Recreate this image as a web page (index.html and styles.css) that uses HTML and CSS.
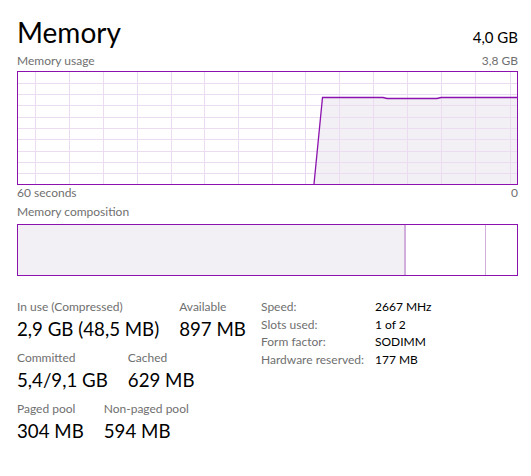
FILE: index.html
```html
<!DOCTYPE html>
<html lang="en">
<head>
<meta charset="utf-8">
<title>Memory</title>
<link rel="stylesheet" href="styles.css">
</head>
<body>
<main class="panel">
  <header class="header">
    <h1 class="title">Memory</h1>
    <span class="total">4,0 GB</span>
  </header>

  <div class="caption-row caption-top">
    <span>Memory usage</span>
    <span>3,8 GB</span>
  </div>
  <svg class="graph" width="501" height="114" viewBox="0 0 501 114" aria-label="Memory usage graph">
    <polygon class="graph-fill" points="297,113 305.5,26.5 366,26.5 370,27.5 420,27.5 424,26.5 500,26.5 500,113"/>
    <g class="graph-grid">
      <line x1="18.5" y1="0" x2="18.5" y2="114"/>
      <line x1="52.5" y1="0" x2="52.5" y2="114"/>
      <line x1="86.5" y1="0" x2="86.5" y2="114"/>
      <line x1="120.5" y1="0" x2="120.5" y2="114"/>
      <line x1="154.5" y1="0" x2="154.5" y2="114"/>
      <line x1="187.5" y1="0" x2="187.5" y2="114"/>
      <line x1="221.5" y1="0" x2="221.5" y2="114"/>
      <line x1="255.5" y1="0" x2="255.5" y2="114"/>
      <line x1="288.5" y1="0" x2="288.5" y2="114"/>
      <line x1="322.5" y1="0" x2="322.5" y2="114"/>
      <line x1="356.5" y1="0" x2="356.5" y2="114"/>
      <line x1="390.5" y1="0" x2="390.5" y2="114"/>
      <line x1="424.5" y1="0" x2="424.5" y2="114"/>
      <line x1="458.5" y1="0" x2="458.5" y2="114"/>
      <line x1="493.5" y1="0" x2="493.5" y2="114"/>
      <line x1="0" y1="12.5" x2="501" y2="12.5"/>
      <line x1="0" y1="23.5" x2="501" y2="23.5"/>
      <line x1="0" y1="34.5" x2="501" y2="34.5"/>
      <line x1="0" y1="46.5" x2="501" y2="46.5"/>
      <line x1="0" y1="57.5" x2="501" y2="57.5"/>
      <line x1="0" y1="68.5" x2="501" y2="68.5"/>
      <line x1="0" y1="80.5" x2="501" y2="80.5"/>
      <line x1="0" y1="91.5" x2="501" y2="91.5"/>
      <line x1="0" y1="102.5" x2="501" y2="102.5"/>
    </g>
    <polyline class="graph-line" points="297,113 305.5,26.5 366,26.5 370,27.5 420,27.5 424,26.5 500,26.5"/>
    <rect class="graph-border" x="0.5" y="0.5" width="500" height="113"/>
  </svg>
  <div class="caption-row caption-axis">
    <span>60 seconds</span>
    <span>0</span>
  </div>

  <div class="caption-row caption-comp">
    <span>Memory composition</span>
  </div>
  <div class="composition">
    <div class="seg seg-inuse" style="width:388px"></div>
    <div class="seg seg-modified" style="width:80px"></div>
    <div class="seg seg-free"></div>
  </div>

  <section class="stats">
    <div class="stats-left">
      <div class="stat-row">
        <div class="stat">
          <div class="stat-label">In use (Compressed)</div>
          <div class="stat-value">2,9 GB (48,5 MB)</div>
        </div>
        <div class="stat">
          <div class="stat-label">Available</div>
          <div class="stat-value">897 MB</div>
        </div>
      </div>
      <div class="stat-row">
        <div class="stat">
          <div class="stat-label">Committed</div>
          <div class="stat-value">5,4/9,1 GB</div>
        </div>
        <div class="stat">
          <div class="stat-label">Cached</div>
          <div class="stat-value">629 MB</div>
        </div>
      </div>
      <div class="stat-row">
        <div class="stat">
          <div class="stat-label">Paged pool</div>
          <div class="stat-value">304 MB</div>
        </div>
        <div class="stat">
          <div class="stat-label">Non-paged pool</div>
          <div class="stat-value">594 MB</div>
        </div>
      </div>
    </div>
    <dl class="specs">
      <dt>Speed:</dt><dd>2667 MHz</dd>
      <dt>Slots used:</dt><dd>1 of 2</dd>
      <dt>Form factor:</dt><dd>SODIMM</dd>
      <dt>Hardware reserved:</dt><dd>177 MB</dd>
    </dl>
  </section>
</main>
</body>
</html>
```
FILE: styles.css
```css
* { box-sizing: border-box; }

html, body {
  margin: 0;
  padding: 0;
  background: #ffffff;
}

body {
  font-family: Lato, "Open Sans", "Liberation Sans", sans-serif;
  color: #000000;
}

.panel {
  width: 531px;
  padding: 14px 13px 0 17px;
}

.header {
  display: flex;
  justify-content: space-between;
  align-items: baseline;
  height: 36px;
}

.title {
  margin: 0;
  font-size: 28px;
  font-weight: 400;
  line-height: 36px;
}

.total {
  font-size: 15px;
  line-height: 20px;
}

.caption-row {
  display: flex;
  justify-content: space-between;
  font-size: 12px;
  line-height: 16px;
  color: #6f6f6f;
}

.caption-top { margin-top: 3px; }
.caption-axis { margin-top: 0; }
.caption-comp { margin-top: 3px; }

.graph {
  display: block;
  margin-top: 2px;
}

.graph-fill { fill: #f2f0f4; }
.graph-grid line { stroke: #ecdcf1; stroke-width: 1; }
.graph-line { fill: none; stroke: #8b12ae; stroke-width: 1.3; }
.graph-border { fill: none; stroke: #8b12ae; stroke-width: 1; }

.composition {
  display: flex;
  margin-top: 4px;
  width: 501px;
  height: 52px;
  border: 1px solid #8b12ae;
}

.seg { height: 100%; }
.seg-inuse {
  background: #f2f0f4;
  border-right: 2px solid #d1aedc;
}
.seg-modified {
  border-right: 1px solid #d1aedc;
}
.seg-free { flex: 1; }

.stats {
  display: grid;
  grid-template-columns: 244px 1fr;
  align-items: start;
  margin-top: 22px;
}

.stats-left {
  display: flex;
  flex-direction: column;
  gap: 9px;
  padding-top: 1px;
}

.stat-row {
  display: flex;
  gap: 20px;
}

.stat-label {
  font-size: 12px;
  line-height: 16px;
  color: #6f6f6f;
  white-space: nowrap;
}

.stat-value {
  margin-top: 2px;
  font-size: 18.7px;
  line-height: 24px;
  white-space: nowrap;
}

.specs {
  display: grid;
  grid-template-columns: 114px 1fr;
  align-content: start;
  margin: 0;
  font-size: 12px;
  line-height: 17.7px;
}

.specs dt {
  color: #6f6f6f;
  white-space: nowrap;
}

.specs dd {
  margin: 0;
  color: #000000;
  white-space: nowrap;
}
```
